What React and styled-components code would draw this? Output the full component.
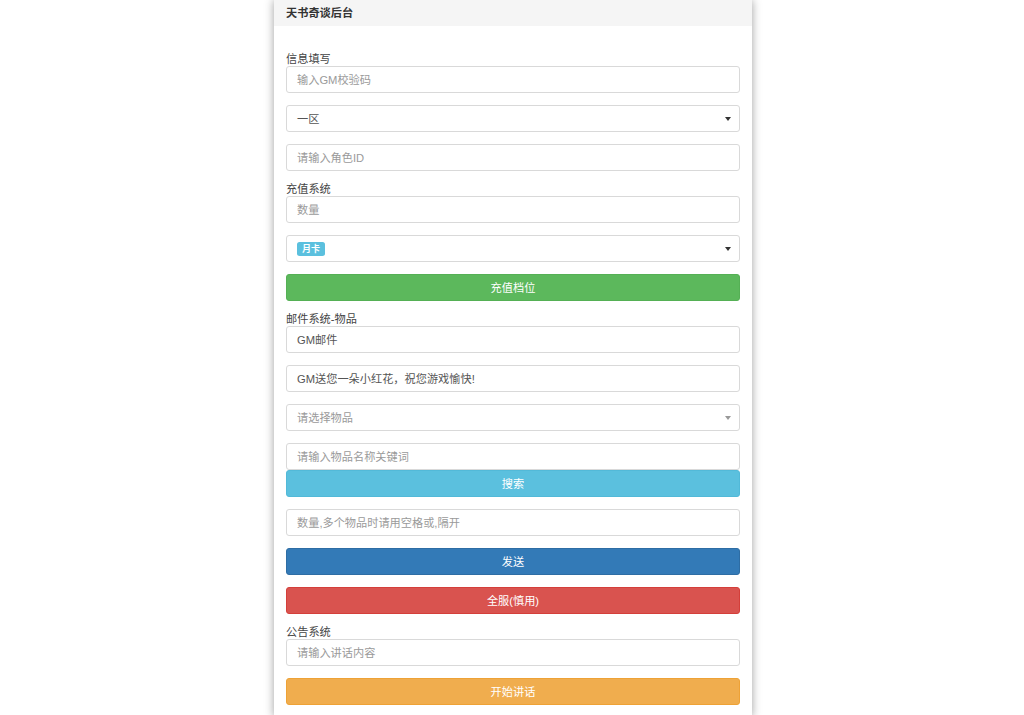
import React from 'react'
import styled, { createGlobalStyle } from 'styled-components'

const GlobalStyle = createGlobalStyle`
  html, body {
    margin: 0;
    padding: 0;
    background: #fff;
  }
  body {
    font-family: "Liberation Sans", "Noto Sans CJK SC", sans-serif;
    font-size: 11.2px;
    color: #333;
  }
  * {
    box-sizing: border-box;
  }
`

const Panel = styled.div`
  width: 478px;
  min-height: 715px;
  margin-left: calc(50% - 238px);
  background: #fff;
  box-shadow: 0 0 9px rgba(0, 0, 0, 0.38);
`

const Header = styled.div`
  height: 26px;
  background: #f5f5f5;
  padding: 0 12px 2px;
  display: flex;
  align-items: center;
  font-weight: bold;
  font-size: 11.2px;
  color: #333;
`

const Body = styled.div`
  padding: 27px 12px 0;
  display: flex;
  flex-direction: column;
`

const Label = styled.div`
  height: 13px;
  line-height: 12px;
  font-size: 11.2px;
  color: #444;
`

const Field = styled.div`
  height: 27px;
  border: 1px solid #d9d9d9;
  border-radius: 3px;
  background: #fff;
  padding: 0 10px 2px;
  display: flex;
  align-items: center;
  justify-content: space-between;
  font-size: 11.2px;
  color: ${p => (p.$placeholder ? '#9a9a9a' : '#555')};
  margin-bottom: ${p => (p.$tight ? '0' : '12px')};
`

const Arrow = styled.span`
  width: 0;
  height: 0;
  margin-right: -2px;
  margin-top: 2px;
  border-left: 3.5px solid transparent;
  border-right: 3.5px solid transparent;
  border-top: 4px solid ${p => (p.$light ? '#999' : '#333')};
`

const Badge = styled.span`
  display: inline-block;
  background: #5bc0de;
  color: #fff;
  font-weight: bold;
  font-size: 9px;
  line-height: 14px;
  height: 14px;
  padding: 0 5px;
  margin-top: 2px;
  border-radius: 2.5px;
`

const Button = styled.div`
  height: 27px;
  border-radius: 3px;
  background: ${p => p.$bg};
  border: 1px solid ${p => p.$border};
  color: #fff;
  font-size: 11.2px;
  padding-bottom: 2px;
  display: flex;
  align-items: center;
  justify-content: center;
  margin-bottom: 12px;
`

const Input = ({ children, value, tight }) => (
  <Field $placeholder={!value} $tight={tight}>
    <span>{value || children}</span>
  </Field>
)

const Select = ({ children, placeholder }) => (
  <Field $placeholder={placeholder}>
    <span>{children}</span>
    <Arrow $light={placeholder} />
  </Field>
)

export default function App() {
  return (
    <>
      <GlobalStyle />
      <Panel>
        <Header>天书奇谈后台</Header>
        <Body>
          <Label>信息填写</Label>
          <Input>输入GM校验码</Input>
          <Select>一区</Select>
          <Input>请输入角色ID</Input>

          <Label>充值系统</Label>
          <Input>数量</Input>
          <Select>
            <Badge>月卡</Badge>
          </Select>
          <Button $bg="#5cb85c" $border="#55b055">充值档位</Button>

          <Label>邮件系统-物品</Label>
          <Input value="GM邮件" />
          <Input value="GM送您一朵小红花，祝您游戏愉快!" />
          <Select placeholder>请选择物品</Select>
          <Input tight>请输入物品名称关键词</Input>
          <Button $bg="#5bc0de" $border="#52b9d8">搜索</Button>
          <Input>数量,多个物品时请用空格或,隔开</Input>
          <Button $bg="#337ab7" $border="#2e6da4">发送</Button>
          <Button $bg="#d9534f" $border="#d43f3a">全服(慎用)</Button>

          <Label>公告系统</Label>
          <Input>请输入讲话内容</Input>
          <Button $bg="#f0ad4e" $border="#eea236">开始讲话</Button>
        </Body>
      </Panel>
    </>
  )
}
